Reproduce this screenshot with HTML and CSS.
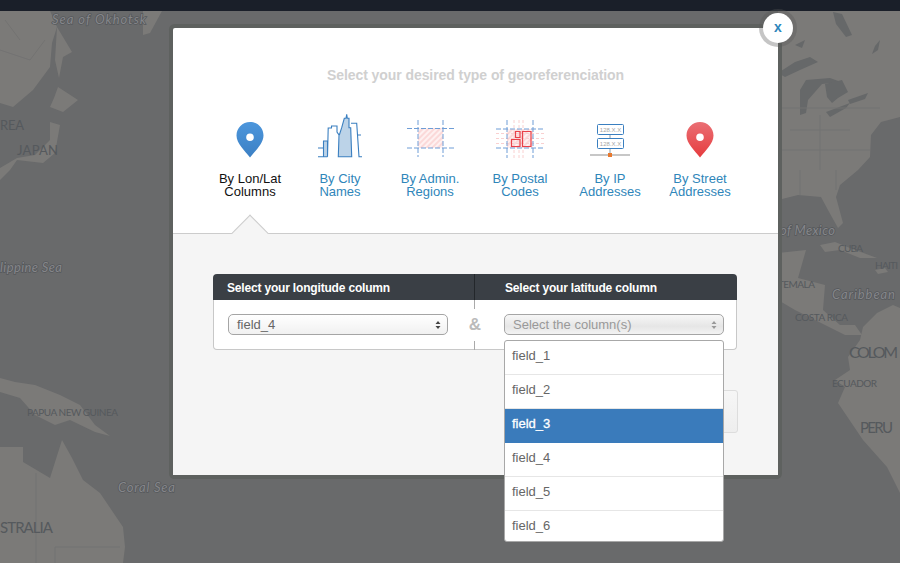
FILE: index.html
```html
<!DOCTYPE html>
<html lang="en">
<head>
    <meta charset="UTF-8">
    <meta name="viewport" content="width=device-width, initial-scale=1.0">
    <title>Georeference</title>
    <link rel="stylesheet" href="styles.css">
</head>
<body>
    <div class="topbar"></div>

    <!-- map behind the dialog -->
    <div class="map">
        <svg class="map-svg" width="900" height="552" viewBox="0 11 900 552">
            <g class="land">
                <path d="M0 11H50L57 27 52 43 50 67 33 90 13 107 0 103Z"/>
                <path d="M57 27L72 52 63 57 59 78 55 60Z"/>
                <path d="M143 11H162L150 33 143 35Z"/>
                <path d="M58 87L78 100 63 112 50 107 54 98Z"/>
                <path d="M50 122L60 125 55 153 43 163 17 160 10 170 0 180V168L17 158 35 155 50 140Z"/>
                <path d="M0 378L15 382 35 385 60 395 80 405 95 425 110 436 95 432 70 420 55 425 35 415 20 398 0 392Z"/>
                <path d="M0 447H23V462L50 478 62 440 72 458 83 480 100 493 123 527 125 547 123 563H0Z"/>
                <path d="M778 11H900V117L881 122 871 135 870 157 858 170 840 185 836 197 843 223 838 228 828 210 821 197 798 195 778 200Z"/>
                <path d="M820 245L835 242 850 248 877 258 860 258 840 250 825 252Z"/>
                <path d="M778 253L806 250 798 278 825 285 823 310 840 325 855 325 862 335 845 335 835 330 815 320 795 310 778 300Z"/>
                <path d="M863 327L877 313 893 305 900 308V493L887 467 863 440 838 403 845 387 835 380 850 370 848 357 860 340Z"/>
                <path d="M875 270L885 268 888 272 878 274Z"/>
            </g>
            <g class="water">
                <path d="M778 73L795 62 810 57 818 62 800 70 785 77Z"/>
                <path d="M800 90L806 80 830 78 841 82 822 84 815 92 808 100 806 113 800 115Z"/>
                <path d="M825 84L842 80 848 92 838 98 832 103 827 97Z"/>
                <path d="M826 112L850 103 846 108 830 117Z"/>
                <path d="M848 100L868 93 865 99 850 104Z"/>
                <path d="M833 12L842 14 852 35 846 37 836 24Z"/>
                <path d="M875 46L880 40 878 50 872 54Z"/>
                <path d="M795 45L805 40 802 48Z"/>
            </g>
            <g class="borders">
                <path d="M778 108H880M820 115V170M778 150H870M790 130H850M800 170V195M836 170V190"/>
                <path d="M36 473V563M55 547V563M55 547H120"/>
                <path d="M0 50L30 60 45 40M5 20L20 40"/>
            </g>
            <text class="sea" x="52" y="24" textLength="94">Sea of Okhotsk</text>
            <text class="sea" x="0" y="272" textLength="62">lippine Sea</text>
            <text class="sea" x="118" y="492" textLength="57">Coral Sea</text>
            <text class="sea" x="780" y="235" textLength="55">of Mexico</text>
            <text class="sea" x="832" y="299" textLength="63">Caribbean</text>
            <text class="country" x="0" y="130" textLength="24">REA</text>
            <text class="country" x="17" y="155" textLength="41">JAPAN</text>
            <text class="country small" x="27" y="416" textLength="91">PAPUA NEW GUINEA</text>
            <text class="country big" x="0" y="533" textLength="53">STRALIA</text>
            <text class="country small" x="838" y="252" textLength="25">CUBA</text>
            <text class="country small" x="875" y="269" textLength="23">HAITI</text>
            <text class="country small" x="778" y="288" textLength="37">TEMALA</text>
            <text class="country small" x="795" y="321" textLength="53">COSTA RICA</text>
            <text class="country large" x="849" y="358" textLength="49">COLOM</text>
            <text class="country small" x="832" y="387" textLength="45">ECUADOR</text>
            <text class="country big" x="860" y="433" textLength="33">PERU</text>
        </svg>
    </div>

    <div class="modal">
        <a class="close-btn">x</a>

        <div class="modal-top">
            <h2 class="modal-title">Select your desired type of georeferenciation</h2>
            <ul class="geo-options">
                <li class="geo-option active">
                    <svg class="geo-icon" width="70" height="50" viewBox="0 0 70 50">
                        <defs>
                            <linearGradient id="pin-blue" x1="0" y1="0" x2="0" y2="1">
                                <stop offset="0" stop-color="#4c96dc"/>
                                <stop offset="1" stop-color="#3c80c4"/>
                            </linearGradient>
                        </defs>
                        <path fill="url(#pin-blue)" fill-rule="evenodd" d="M35 12C27.500 12 21.500 18 21.500 25.500 21.500 33.500 30 41 35 47.500 40 41 48.500 33.500 48.500 25.500 48.500 18 42.500 12 35 12ZM35 23.500A3.800 3.800 0 1 1 35 31.100 3.800 3.800 0 1 1 35 23.500Z"/>
                    </svg>
                    <span>By Lon/Lat<br>Columns</span>
                </li>
                <li class="geo-option">
                    <svg class="geo-icon" width="70" height="50" viewBox="0 0 70 50">
                        <path fill="#bcd3e8" d="M18.500 46.700V31H22.500V46.700ZM33.300 46.700L34.300 25 36.700 17.700 39.300 8.300H41L41.700 4.300 42.300 8.300H44V17.700H45.700L46.700 46.700Z"/>
                        <path fill="none" stroke="#3a7fc0" stroke-width="1.100" d="M13 46.700H22.500M18.500 46.700V31H22.500V46.700L23.200 18H26.500V16H32V22L34 25 33.300 46.700H46.700L45.700 17.700H44V8.300H42.300L41.700 4.300 41 8.300H39.300L36.700 17.700 34.300 25M46 13.300H51.700L54 46.700H57M53 25H56M13 38H18"/>
                    </svg>
                    <span>By City<br>Names</span>
                </li>
                <li class="geo-option">
                    <svg class="geo-icon" width="70" height="50" viewBox="0 0 70 50">
                        <defs>
                            <pattern id="hatch" width="4" height="4" patternUnits="userSpaceOnUse" patternTransform="rotate(45)">
                                <rect width="4" height="4" fill="#fef1f1"/>
                                <rect width="2" height="4" fill="#fbd9d9"/>
                            </pattern>
                        </defs>
                        <rect x="23" y="18" width="25" height="20" fill="url(#hatch)"/>
                        <path class="dash-blue" d="M12 18.500H60M12 38H60M23 10V47M48 10V47"/>
                    </svg>
                    <span>By Admin.<br>Regions</span>
                </li>
                <li class="geo-option">
                    <svg class="geo-icon" width="70" height="50" viewBox="0 0 70 50">
                        <rect x="22" y="19" width="26" height="19" fill="url(#hatch)"/>
                        <path class="dash-pink" d="M11 23.500H60M11 28.500H60M11 33.500H60M29 10V48M34 10V48M38 10V48"/>
                        <path class="dash-blue" d="M11 19H60M11 38H60M22 10V48M48 10V48"/>
                        <path fill="none" stroke="#e8424a" stroke-width="1.200" d="M26.500 29.500H35V36.500H26.500ZM30.500 21.500H35V27.500H30.500ZM37.500 21.500H46V36.500H37.500Z"/>
                    </svg>
                    <span>By Postal<br>Codes</span>
                </li>
                <li class="geo-option">
                    <svg class="geo-icon" width="70" height="50" viewBox="0 0 70 50">
                        <path fill="none" stroke="#8a9aa8" d="M35 24V28M35 38V44"/>
                        <rect x="22.500" y="14.500" width="26" height="10" rx="1" class="ip-box"/>
                        <rect x="22.500" y="28.500" width="26" height="10" rx="1" class="ip-box"/>
                        <text class="ip-text" x="35.500" y="22">128.X.X</text>
                        <text class="ip-text" x="35.500" y="36">128.X.X</text>
                        <path fill="none" stroke="#b4b4b4" stroke-width="1.500" d="M15 45H55"/>
                        <rect x="33" y="43" width="4" height="4" fill="#e8792f"/>
                    </svg>
                    <span>By IP<br>Addresses</span>
                </li>
                <li class="geo-option">
                    <svg class="geo-icon" width="70" height="50" viewBox="0 0 70 50">
                        <defs>
                            <linearGradient id="pin-red" x1="0" y1="0" x2="0" y2="1">
                                <stop offset="0" stop-color="#ea6f74"/>
                                <stop offset="1" stop-color="#e63c3e"/>
                            </linearGradient>
                        </defs>
                        <path fill="url(#pin-red)" fill-rule="evenodd" d="M35 12C27.500 12 21.500 18 21.500 25.500 21.500 33.500 30 41 35 47.500 40 41 48.500 33.500 48.500 25.500 48.500 18 42.500 12 35 12ZM35 23.500A3.800 3.800 0 1 1 35 31.100 3.800 3.800 0 1 1 35 23.500Z"/>
                    </svg>
                    <span>By Street<br>Addresses</span>
                </li>
            </ul>
        </div>

        <div class="modal-bottom">
            <div class="notch"></div>

            <div class="columns-panel">
                <div class="panel-head">
                    <div class="head-left">Select your longitude column</div>
                    <div class="head-right">Select your latitude column</div>
                </div>
                <div class="panel-body">
                    <div class="fake-select">
                        <span>field_4</span>
                        <svg class="arrows" width="6" height="10" viewBox="0 0 6 10"><path d="M3 1L5.500 4H.5ZM3 9L.5 6H5.500Z"/></svg>
                    </div>
                    <div class="amp">&amp;</div>
                    <div class="select-wrap">
                        <div class="fake-select disabled">
                            <span>Select the column(s)</span>
                            <svg class="arrows" width="6" height="10" viewBox="0 0 6 10"><path d="M3 1L5.500 4H.5ZM3 9L.5 6H5.500Z"/></svg>
                        </div>
                        <ul class="dropdown">
                            <li>field_1</li>
                            <li>field_2</li>
                            <li class="selected">field_3</li>
                            <li>field_4</li>
                            <li>field_5</li>
                            <li>field_6</li>
                        </ul>
                    </div>
                </div>
            </div>

            <div class="next-btn"></div>
        </div>
    </div>
</body>
</html>
```

FILE: styles.css
```css
body {
    font-family: "Liberation Sans", Arial, sans-serif;
    background-color: #696a6b;
    margin: 0;
    height: 563px;
    overflow: hidden;
    position: relative;
}
.topbar {
    height: 11px;
    background-color: #1a1f29;
}
.map {
    height: 552px;
}
.map-svg {
    display: block;
}
.land path {
    fill: #7b7a78;
}
.water path {
    fill: #666869;
}
.borders path {
    fill: none;
    stroke: #737372;
    stroke-width: 1;
}
.sea {
    font-family: Lato, sans-serif;
    font-style: italic;
    font-size: 13px;
    fill: #85868a;
    stroke: #55585b;
    stroke-width: 1.500px;
    paint-order: stroke;
}
.country {
    font-family: Lato, sans-serif;
    font-size: 13px;
    fill: #55595d;
}
.country.small {
    font-size: 10px;
}
.country.big {
    font-size: 15px;
}
.country.large {
    font-size: 16px;
}

.modal {
    position: absolute;
    left: 173px;
    top: 28px;
    width: 605px;
    height: 447px;
    display: flex;
    flex-direction: column;
    background: #fff;
    border-radius: 2px;
    box-shadow: 0 0 0 4px #5e615f;
}
.close-btn {
    position: absolute;
    left: 590px;
    top: -15px;
    width: 30px;
    height: 30px;
    z-index: 3;
    border-radius: 50%;
    background: #fff;
    box-shadow: 0 0 0 4px rgba(90, 90, 90, 0.35);
    color: #2c85bb;
    font-size: 14px;
    font-weight: bold;
    line-height: 28px;
    text-align: center;
}
.modal-top {
    height: 205px;
}
.modal-title {
    margin: 0;
    padding-top: 38px;
    font-size: 14px;
    font-weight: bold;
    letter-spacing: -0.07px;
    line-height: 18px;
    color: #d0d0d0;
    text-align: center;
}
.geo-options {
    list-style: none;
    display: flex;
    margin: 26px 0 0;
    padding: 0 0 0 32px;
}
.geo-option {
    width: 90px;
    font-size: 13px;
    line-height: 13px;
    color: #2f86ba;
    text-align: center;
}
.geo-option.active {
    color: #111;
}
.geo-icon {
    display: block;
    margin: 0 auto 12px;
}
.dash-blue {
    fill: none;
    stroke: #6e9dd6;
    stroke-width: 1;
    stroke-dasharray: 5 2;
}
.dash-pink {
    fill: none;
    stroke: #f9d0d0;
    stroke-width: 1;
    stroke-dasharray: 3 2;
}
.ip-box {
    fill: #fff;
    stroke: #3a7fc0;
    stroke-width: 1;
}
.ip-text {
    font-size: 6px;
    fill: #a6a6a6;
    text-anchor: middle;
}

.modal-bottom {
    flex: 1;
    position: relative;
    background-color: #f5f5f5;
    border-top: 1px solid #ccc;
}
.notch {
    position: absolute;
    left: 64px;
    top: -14px;
    width: 26px;
    height: 26px;
    box-sizing: border-box;
    background: #f5f5f5;
    border-top: 1px solid #ccc;
    border-left: 1px solid #ccc;
    transform: rotate(45deg);
}
.columns-panel {
    position: relative;
    width: 524px;
    margin: 40px 0 0 40px;
}
.panel-head {
    display: flex;
    height: 26px;
    background-color: #3a3f45;
    border-radius: 4px 4px 0 0;
    color: #fff;
    font-size: 12px;
    font-weight: bold;
    letter-spacing: -0.18px;
    line-height: 28px;
}
.head-left {
    width: 247px;
    padding-left: 14px;
    border-right: 1px solid #23272b;
}
.head-right {
    padding-left: 30px;
}
.panel-body {
    display: flex;
    height: 50px;
    box-sizing: border-box;
    padding: 14px 12px 0 14px;
    background: #fff;
    border: 1px solid #c8c8c8;
    border-top: none;
    border-radius: 0 0 4px 4px;
}
.fake-select {
    display: flex;
    align-items: center;
    justify-content: space-between;
    width: 220px;
    height: 21px;
    box-sizing: border-box;
    padding: 0 6px 0 8px;
    border: 1px solid #a5a5a5;
    border-radius: 5px;
    background: linear-gradient(#fff, #f1f1f1);
    color: #666;
    font-size: 13px;
}
.fake-select.disabled {
    background: linear-gradient(#f7f7f7, #e6e6e6 60%, #f3f3f3);
    color: #999;
}
.arrows path {
    fill: #444;
}
.disabled .arrows path {
    fill: #999;
}
.amp {
    position: relative;
    width: 54px;
    padding-right: 2px;
    color: #bbb;
    font-size: 17px;
    font-weight: bold;
    line-height: 21px;
    text-align: center;
}
.amp::before, .amp::after {
    content: "";
    position: absolute;
    left: 26px;
    width: 1px;
    background: #aaa;
}
.amp::before {
    top: -14px;
    height: 9px;
}
.amp::after {
    top: 27px;
    height: 9px;
}
.select-wrap {
    position: relative;
}
.dropdown {
    position: absolute;
    left: 0;
    top: 26px;
    z-index: 2;
    list-style: none;
    margin: 0;
    padding: 0;
    width: 220px;
    box-sizing: border-box;
    background: #fff;
    border: 1px solid #a8a8a8;
    border-radius: 3px;
    color: #666;
    font-size: 13px;
}
.dropdown li {
    height: 34px;
    box-sizing: border-box;
    padding-left: 7px;
    line-height: 29px;
    border-bottom: 1px solid #e6e6e6;
}
.dropdown li:last-child {
    height: 30px;
    border-bottom: none;
}
.dropdown .selected {
    background-color: #3a7bbb;
    border-bottom-color: #3a7bbb;
    color: #fff;
    -webkit-text-stroke: 0.3px #fff;
}
.next-btn {
    width: 130px;
    height: 43px;
    box-sizing: border-box;
    margin: 40px 40px 0 auto;
    border: 1px solid #ddd;
    border-radius: 3px;
    background: linear-gradient(#f6f6f6, #eeeeee);
}
```
